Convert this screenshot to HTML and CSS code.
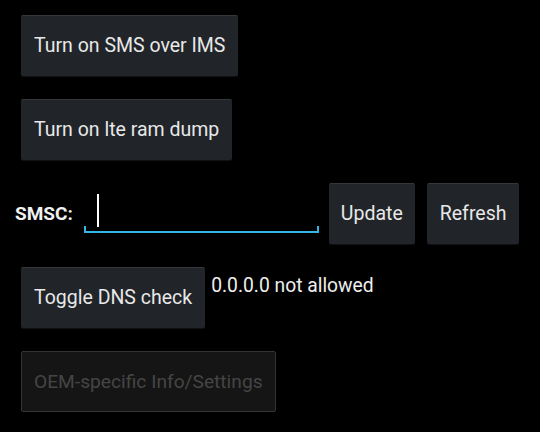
FILE: index.html
```html
<!DOCTYPE html>
<html>
<head>
<meta charset="utf-8">
<link rel="stylesheet" href="styles.css">
</head>
<body>
<div class="screen">
  <div class="row btn-row">
    <button class="btn">Turn on SMS over IMS</button>
  </div>
  <div class="row btn-row">
    <button class="btn">Turn on lte ram dump</button>
  </div>
  <div class="row smsc-row">
    <span class="label">SMSC:</span>
    <div class="edit"><span class="cursor"></span></div>
    <button class="btn btn-update">Update</button>
    <button class="btn btn-refresh">Refresh</button>
  </div>
  <div class="row btn-row dns-row">
    <button class="btn">Toggle DNS check</button>
    <span class="dns-text">0.0.0.0 not allowed</span>
  </div>
  <div class="row btn-row">
    <button class="btn btn-disabled" disabled>OEM-specific Info/Settings</button>
  </div>
</div>
</body>
</html>
```

FILE: styles.css
```css
html, body {
  margin: 0;
  padding: 0;
  background: #000;
}
body {
  width: 540px;
  height: 432px;
  overflow: hidden;
  font-family: Roboto, "Noto Sans", sans-serif;
  color: #e6e6e6;
}
.screen {
  display: flex;
  flex-direction: column;
  gap: 24px;
  padding-top: 15px;
}
.row {
  display: flex;
  align-items: flex-start;
  height: 60px;
}
.btn-row {
  padding-left: 21px;
}
.btn {
  height: 61px;
  padding: 0 13px;
  margin: 0;
  background: #212429;
  border: none;
  border-top: 1px solid #34373c;
  border-radius: 2px;
  box-shadow: 0 1px 0 #101113;
  color: #e8e8e8;
  font-family: Roboto, "Noto Sans", sans-serif;
  font-size: 19.5px;
  line-height: 22px;
  text-align: left;
  cursor: default;
}
.btn-disabled {
  background: #151515;
  border: 1px solid #343434;
  color: #454545;
  box-shadow: none;
  padding: 0 12px;
  font-size: 19.2px;
}
.smsc-row {
  padding-left: 15px;
}
.label {
  font-weight: bold;
  font-size: 19px;
  line-height: 22px;
  margin-top: 20px;
  color: #f0f0f0;
}
.edit {
  position: relative;
  width: 235px;
  height: 50px;
  margin-left: 11px;
  border-bottom: 2px solid #33b5e5;
  box-sizing: border-box;
}
.edit::before, .edit::after {
  content: "";
  position: absolute;
  bottom: 0;
  width: 2px;
  height: 5px;
  background: #33b5e5;
}
.edit::before { left: 0; }
.edit::after { right: 0; }
.cursor {
  position: absolute;
  left: 13px;
  top: 11px;
  width: 2px;
  height: 33px;
  background: #ffffff;
}
.btn-update {
  margin-left: 10px;
  padding: 0 12px;
}
.btn-refresh {
  margin-left: 12px;
}
.dns-text {
  margin-left: 6px;
  margin-top: 8px;
  font-size: 19.3px;
  line-height: 22px;
  color: #eeeeee;
}
```
